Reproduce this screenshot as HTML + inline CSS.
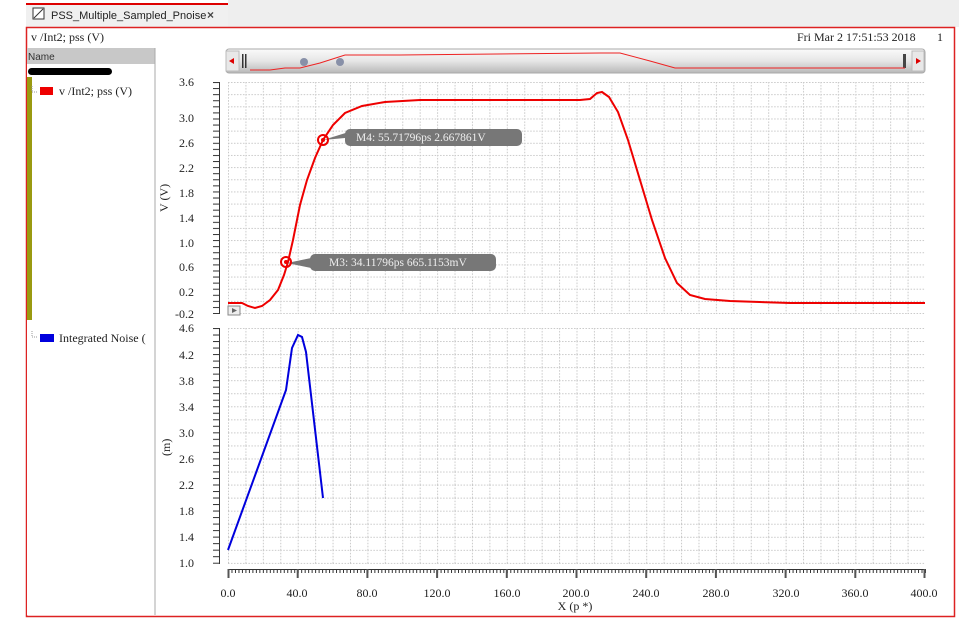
<!DOCTYPE html>
<html><head><meta charset="utf-8"><style>
html,body{margin:0;padding:0;background:#fff;width:959px;height:623px;overflow:hidden;font-family:"Liberation Serif",serif;}
</style></head><body>
<svg width="959" height="623" viewBox="0 0 959 623" xmlns="http://www.w3.org/2000/svg" font-family="Liberation Serif, serif">
<defs>
<pattern id="g1" x="228" y="82" width="17.425" height="12.16" patternUnits="userSpaceOnUse">
<path d="M0.5 0V12.16M0 0.5H17.425" stroke="#c8c8c8" stroke-width="1" stroke-dasharray="1.5 1.5" fill="none"/>
</pattern>
<pattern id="g2" x="228" y="328" width="17.425" height="13.05" patternUnits="userSpaceOnUse">
<path d="M0.5 0V13.05M0 0.5H17.425" stroke="#c8c8c8" stroke-width="1" stroke-dasharray="1.5 1.5" fill="none"/>
</pattern>
<pattern id="yt1" x="213" y="82" width="20" height="6.08" patternUnits="userSpaceOnUse"><path d="M0 0.5H7" stroke="#333"/></pattern>
<pattern id="yt2" x="213" y="328" width="20" height="6.52" patternUnits="userSpaceOnUse"><path d="M0 0.5H7" stroke="#333"/></pattern>
<pattern id="xt" x="228" y="569" width="3.485" height="20" patternUnits="userSpaceOnUse"><path d="M0.5 0V4" stroke="#333"/></pattern>
<linearGradient id="sb" x1="0" y1="0" x2="0" y2="1"><stop offset="0" stop-color="#fafafa"/><stop offset=".5" stop-color="#e6e6e6"/><stop offset="1" stop-color="#b8b8b8"/></linearGradient>
</defs>
<rect x="228" y="0" width="731" height="27" fill="#eee"/>
<rect x="26" y="3" width="202" height="24" fill="#f0f0f0"/>
<rect x="26" y="3" width="202" height="2" fill="#d00"/>
<rect x="33" y="8" width="11" height="11" fill="#fff" stroke="#333"/>
<path d="M34 18L43 9" stroke="#333"/>
<text x="51" y="19" font-family="Liberation Sans, sans-serif" font-size="11" fill="#222">PSS_Multiple_Sampled_Pnoise</text>
<text x="207" y="19" font-family="Liberation Sans, sans-serif" font-size="12" fill="#444" font-weight="bold">×</text>
<rect x="26.5" y="27.5" width="928" height="589" fill="#fff" stroke="#d22" stroke-width="1.5"/>
<text x="31" y="41" font-size="12" fill="#222">v /Int2; pss (V)</text>
<text x="797" y="41" font-size="12" fill="#222">Fri Mar 2 17:51:53 2018</text>
<text x="937" y="41" font-size="12" fill="#222">1</text>
<rect x="27" y="48" width="128" height="567" fill="#fff"/>
<rect x="27" y="48" width="128" height="16" fill="#c8c8c8"/>
<text x="28" y="60" font-family="Liberation Sans, sans-serif" font-size="10" fill="#333">Name</text>
<line x1="155" y1="48" x2="155" y2="615" stroke="#aaa"/>
<rect x="28" y="68" width="84" height="7" rx="3.5" fill="#000"/>
<rect x="27" y="77" width="5" height="243" fill="#9a9a10"/>
<path d="M32 86V92H37" stroke="#999" stroke-dasharray="1 1" fill="none"/>
<rect x="40" y="87" width="13" height="8" fill="#e00"/>
<text x="59" y="95" font-size="12" fill="#222">v /Int2; pss (V)</text>
<path d="M32 331V337H37" stroke="#999" stroke-dasharray="1 1" fill="none"/>
<rect x="40" y="334" width="14" height="8" fill="#00d"/>
<text x="59" y="342" font-size="12" fill="#222">Integrated Noise (</text>
<rect x="226" y="49" width="699" height="24" rx="3" fill="url(#sb)" stroke="#aaa"/>
<rect x="226" y="51" width="13" height="20" fill="#e8e8e8" stroke="#bbb"/>
<path d="M229 61L234 58V64Z" fill="#d00"/>
<rect x="242" y="54" width="1.5" height="14" fill="#333"/><rect x="245" y="54" width="1.5" height="14" fill="#333"/>
<rect x="903" y="54" width="3" height="14" fill="#444"/>
<rect x="912" y="51" width="12" height="20" fill="#e8e8e8" stroke="#bbb"/>
<path d="M921 61L916 58V64Z" fill="#d00"/>
<path d="M250 70H270L285 68H300L320 63L345 55H400L600 53H620L650 61L675 68H905" stroke="#e22" fill="none"/>
<circle cx="304" cy="62" r="4" fill="#8890a8"/><circle cx="340" cy="62" r="4" fill="#8890a8"/>
<rect x="228" y="82" width="697" height="232" fill="url(#g1)"/>
<rect x="213" y="82" width="7" height="232" fill="url(#yt1)"/>
<line x1="219.5" y1="82" x2="219.5" y2="314" stroke="#333"/>
<g font-size="12" fill="#222" text-anchor="end">
<text x="194" y="86">3.6</text><text x="194" y="122">3.0</text><text x="194" y="147">2.6</text><text x="194" y="172">2.2</text><text x="194" y="197">1.8</text><text x="194" y="222">1.4</text><text x="194" y="247">1.0</text><text x="194" y="271">0.6</text><text x="194" y="296">0.2</text><text x="194" y="318">-0.2</text>
</g>
<text x="168" y="212" font-size="12" fill="#222" transform="rotate(-90 168 212)">V (V)</text>
<rect x="228" y="306" width="12" height="9" fill="#eee" stroke="#888"/>
<path d="M232 308L237 310.5L232 313Z" fill="#666"/>
<path d="M228 303H242L248 306L255 308L262 306L270 300L278 290L284 275L288 262L293 240L300 205L307 180L315 158L323 140L333 125L345 113L362 106L385 102L420 100L580 100L590 99L597 93L602 92L609 97L618 112L628 140L640 180L652 220L665 258L677 283L690 295L705 299L730 301L790 303L925 303" stroke="#e00" stroke-width="2" fill="none"/>
<path d="M323 140L352 131V146L345 138Z" fill="#777"/>
<rect x="345" y="129" width="177" height="17" rx="5" fill="#777"/>
<text x="356" y="141" font-size="11.5" fill="#eee">M4: 55.71796ps 2.667861V</text>
<circle cx="323" cy="140" r="5" fill="none" stroke="#e00" stroke-width="2"/><circle cx="323" cy="140" r="2" fill="#e00"/>
<path d="M287 263L316 257V269Z" fill="#777"/>
<rect x="310" y="254" width="186" height="17" rx="5" fill="#777"/>
<text x="329" y="266" font-size="11.5" fill="#eee">M3: 34.11796ps 665.1153mV</text>
<circle cx="286" cy="262" r="5" fill="none" stroke="#e00" stroke-width="2"/><circle cx="286" cy="262" r="2" fill="#e00"/>
<rect x="228" y="328" width="697" height="236" fill="url(#g2)"/>
<rect x="213" y="328" width="7" height="236" fill="url(#yt2)"/>
<line x1="219.5" y1="328" x2="219.5" y2="564" stroke="#333"/>
<g font-size="12" fill="#222" text-anchor="end">
<text x="194" y="332">4.6</text><text x="194" y="359">4.2</text><text x="194" y="385">3.8</text><text x="194" y="411">3.4</text><text x="194" y="437">3.0</text><text x="194" y="463">2.6</text><text x="194" y="489">2.2</text><text x="194" y="515">1.8</text><text x="194" y="541">1.4</text><text x="194" y="567">1.0</text>
</g>
<text x="170" y="456" font-size="12" fill="#222" transform="rotate(-90 170 456)">(m)</text>
<path d="M228 550L286 390L292 348L298 335L302 337L306 352L323 498" stroke="#00d" stroke-width="2" fill="none"/>
<line x1="228" y1="569.5" x2="925" y2="569.5" stroke="#333"/>
<rect x="228" y="569" width="698" height="4" fill="url(#xt)"/>
<g stroke="#555" stroke-width="2">
<path d="M228.5 569V578M297.7 569V578M367.4 569V578M437.1 569V578M506.8 569V578M576.5 569V578M646.2 569V578M715.9 569V578M785.6 569V578M855.3 569V578M924.5 569V578"/>
</g>
<g font-size="12" fill="#222" text-anchor="middle">
<text x="228" y="597">0.0</text><text x="297" y="597">40.0</text><text x="367" y="597">80.0</text><text x="437" y="597">120.0</text><text x="507" y="597">160.0</text><text x="576" y="597">200.0</text><text x="646" y="597">240.0</text><text x="716" y="597">280.0</text><text x="786" y="597">320.0</text><text x="855" y="597">360.0</text><text x="924" y="597">400.0</text>
</g>
<text x="575" y="610" font-size="12" fill="#222" text-anchor="middle">X (p *)</text>
</svg>
</body></html>
